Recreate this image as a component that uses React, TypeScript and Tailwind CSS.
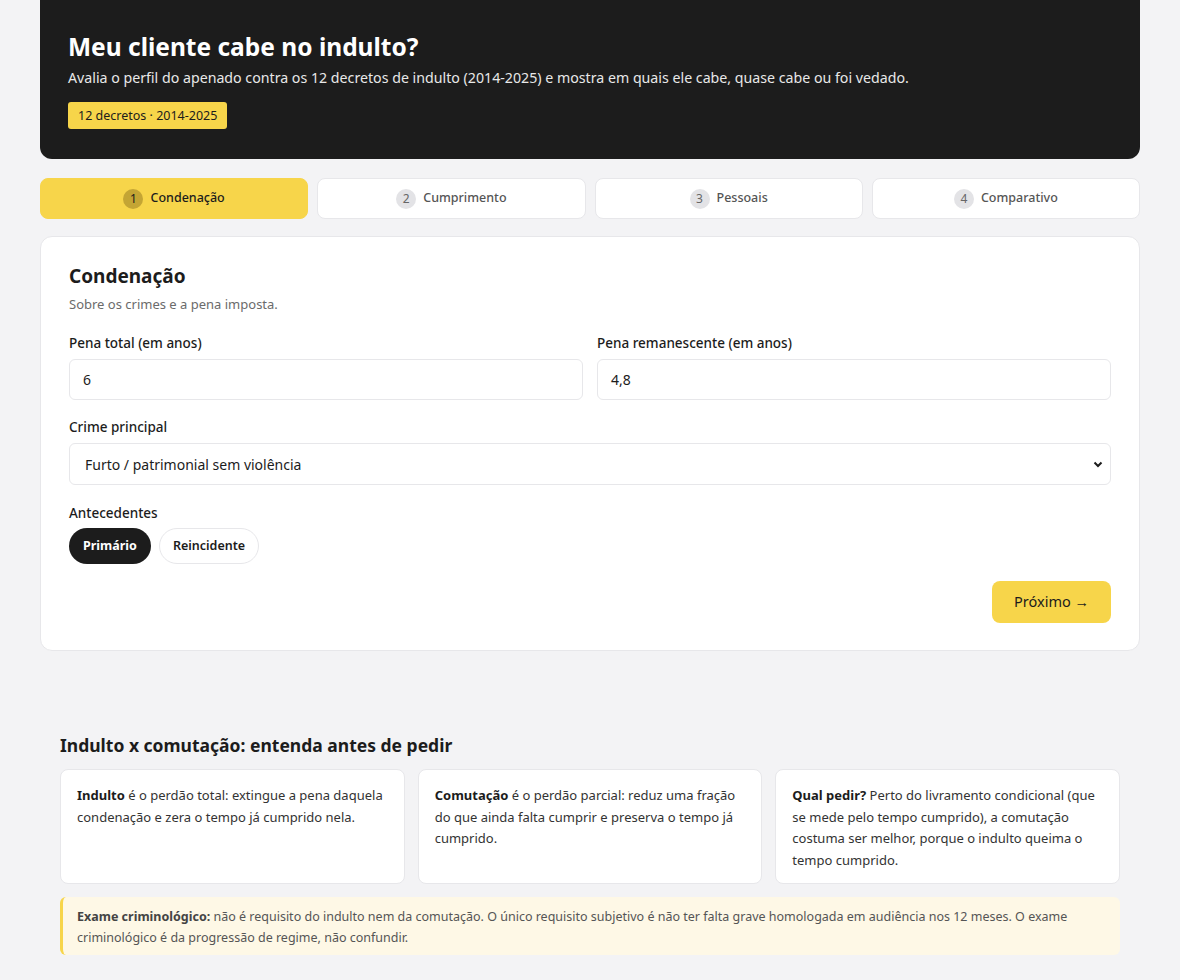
import React from "react";

const font = { fontFamily: '"Segoe UI", "Noto Sans", "Open Sans", sans-serif' };

function Tab({ n, label, active }: { n: number; label: string; active?: boolean }) {
  return (
    <div
      className={
        "flex h-[41px] items-center justify-center gap-[7px] rounded-lg border text-[12.5px] font-medium " +
        (active ? "border-[#f7d54a] bg-[#f7d54a] text-[#1c1c1c]" : "border-[#e7e7ea] bg-white text-[#555]")
      }
    >
      <span
        className={
          "flex h-[20px] w-[20px] items-center justify-center rounded-full text-[12px] font-normal " +
          (active ? "bg-[#c4a534] text-[#1c1c1c]" : "bg-[#e3e3e6] text-[#666]")
        }
      >
        {n}
      </span>
      <span>{label}</span>
    </div>
  );
}

export default function App() {
  return (
    <div className="min-h-[980px] bg-[#f3f3f5] text-[#1c1c1c]" style={font}>
      <div className="mx-auto w-[1100px]">
        <header className="rounded-b-xl bg-[#1c1c1c] px-[28px] pb-[30px] pt-[31px] text-white">
          <h1 className="text-[24.5px] font-bold leading-[32px]">Meu cliente cabe no indulto?</h1>
          <p className="mt-[4px] text-[14.2px] leading-[22px] text-[#e8e8e8]">
            Avalia o perfil do apenado contra os 12 decretos de indulto (2014-2025) e mostra em quais ele cabe, quase cabe ou foi vedado.
          </p>
          <span className="mt-[13px] inline-block h-[27px] rounded-[3px] bg-[#f7d54a] px-[10px] text-[12.5px] leading-[27px] text-[#1c1c1c]">
            12 decretos · 2014-2025
          </span>
        </header>

        <nav className="mt-[19px] grid grid-cols-4 gap-[9px]">
          <Tab n={1} label="Condenação" active />
          <Tab n={2} label="Cumprimento" />
          <Tab n={3} label="Pessoais" />
          <Tab n={4} label="Comparativo" />
        </nav>

        <section className="mt-[17px] rounded-xl border border-[#e7e7ea] bg-white px-[28px] pb-[27px] pt-[26px]">
          <h2 className="text-[19px] font-bold leading-[26px]">Condenação</h2>
          <p className="mt-[6px] text-[13px] leading-[18px] text-[#6b6b6b]">Sobre os crimes e a pena imposta.</p>

          <div className="mt-[21px] grid grid-cols-2 gap-[14px]">
            <div>
              <label className="block text-[13.5px] font-medium leading-[18px]">Pena total (em anos)</label>
              <div className="mt-[7px] flex h-[41px] items-center rounded-md border border-[#e7e7ea] px-[13px] text-[14px]">6</div>
            </div>
            <div>
              <label className="block text-[13.5px] font-medium leading-[18px]">Pena remanescente (em anos)</label>
              <div className="mt-[7px] flex h-[41px] items-center rounded-md border border-[#e7e7ea] px-[13px] text-[14px]">4,8</div>
            </div>
          </div>

          <div className="mt-[18px]">
            <label className="block text-[13.5px] font-medium leading-[18px]">Crime principal</label>
            <div className="mt-[7px] flex h-[42px] items-center justify-between rounded-md border border-[#e7e7ea] pl-[15px] pr-[6px] text-[14px]">
              <span>Furto / patrimonial sem violência</span>
              <svg width="12" height="12" viewBox="0 0 12 12">
                <path d="M2.5 4.5 L6 8 L9.5 4.5" fill="none" stroke="#1c1c1c" strokeWidth="2" />
              </svg>
            </div>
          </div>

          <div className="mt-[19px]">
            <label className="block text-[13.5px] font-medium leading-[18px]">Antecedentes</label>
            <div className="mt-[6px] flex gap-[8px]">
              <span className="flex h-[36px] items-center rounded-full bg-[#1c1c1c] px-[14px] text-[12.5px] font-bold text-white">Primário</span>
              <span className="flex h-[36px] items-center rounded-full border border-[#e7e7ea] bg-white px-[13px] text-[12.5px] font-semibold">Reincidente</span>
            </div>
          </div>

          <div className="mt-[17px] flex justify-end">
            <button className="h-[42px] rounded-lg bg-[#f7d54a] px-[22px] text-[14.5px] font-normal text-[#1c1c1c]">Próximo →</button>
          </div>
        </section>

        <div className="mx-[20px] mt-[82px] pb-[26px]">
          <h3 className="text-[17.5px] font-bold leading-[24px]">Indulto x comutação: entenda antes de pedir</h3>
          <div className="mt-[12px] grid grid-cols-3 gap-[13px]">
            <div className="h-[115px] rounded-lg border border-[#e7e7ea] bg-white px-[16px] pt-[15px] text-[13px] leading-[21.7px] text-[#333]">
              <b className="text-[#1c1c1c]">Indulto</b> é o perdão total: extingue a pena daquela condenação e zera o tempo já cumprido nela.
            </div>
            <div className="h-[115px] rounded-lg border border-[#e7e7ea] bg-white px-[16px] pt-[15px] text-[13px] leading-[21.7px] text-[#333]">
              <b className="text-[#1c1c1c]">Comutação</b> é o perdão parcial: reduz uma fração do que ainda falta cumprir e preserva o tempo já cumprido.
            </div>
            <div className="h-[115px] rounded-lg border border-[#e7e7ea] bg-white px-[16px] pt-[15px] text-[13px] leading-[21.7px] text-[#333]">
              <b className="text-[#1c1c1c]">Qual pedir?</b> Perto do livramento condicional (que se mede pelo tempo cumprido), a comutação costuma ser melhor, porque o indulto queima o tempo cumprido.
            </div>
          </div>
          <div className="mt-[13px] rounded-md border-l-[3px] border-[#f7d54a] bg-[#fef8e6] pb-[7px] pl-[14px] pr-[16px] pt-[9px] text-[12.5px] leading-[21px] text-[#555]">
            <b className="text-[#444]">Exame criminológico:</b> não é requisito do indulto nem da comutação. O único requisito subjetivo é não ter falta grave homologada em audiência nos 12 meses. O exame criminológico é da progressão de regime, não confundir.
          </div>
        </div>
      </div>
    </div>
  );
}
